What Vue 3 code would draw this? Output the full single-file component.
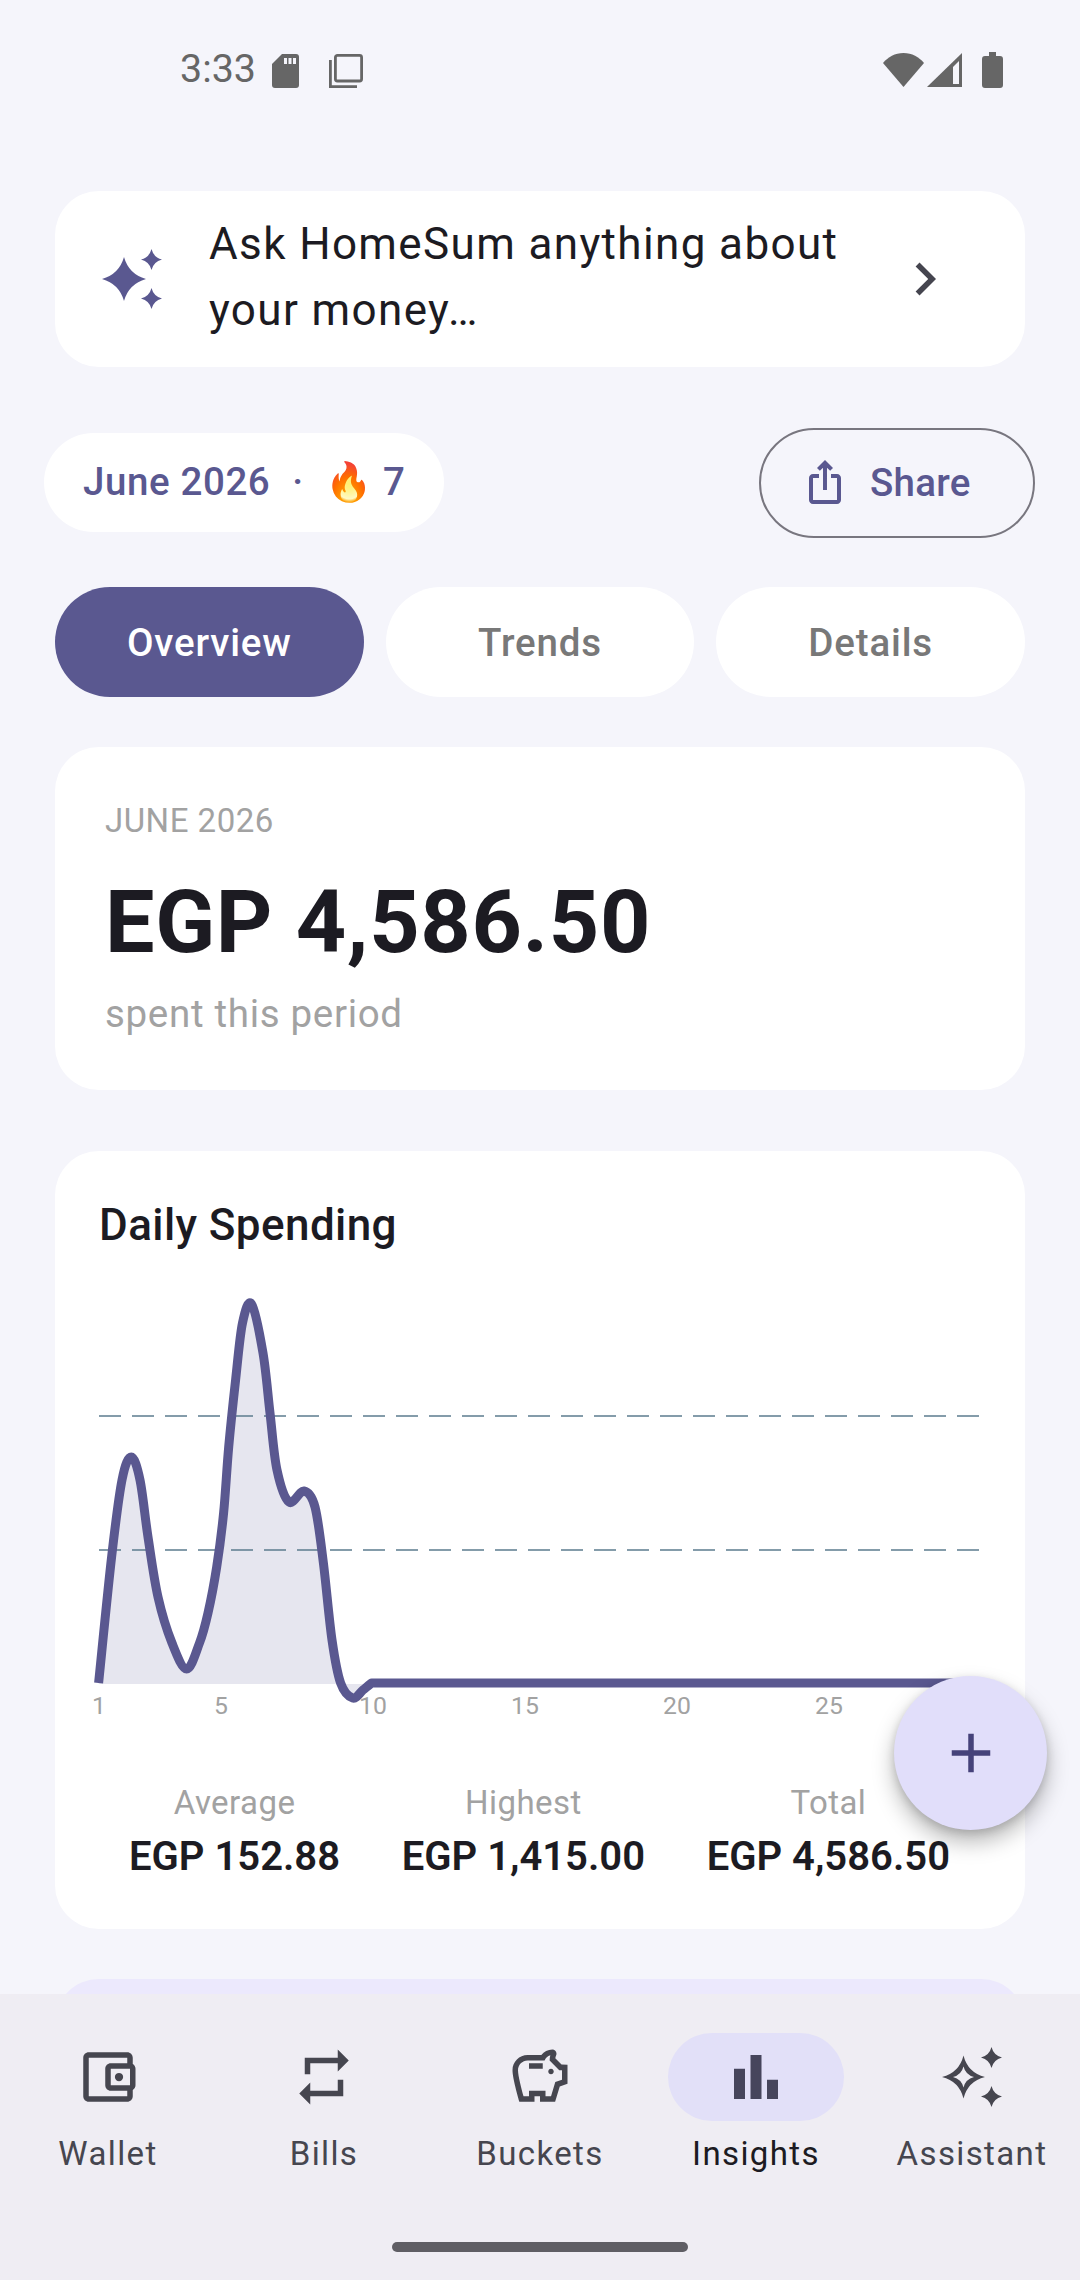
<script setup>
const navs = [
  { label: 'Wallet', icon: 'wallet' },
  { label: 'Bills', icon: 'bills' },
  { label: 'Buckets', icon: 'pig' },
  { label: 'Insights', icon: 'bars', active: true },
  { label: 'Assistant', icon: 'spark' },
]
const stats = [
  { label: 'Average', value: 'EGP 152.88' },
  { label: 'Highest', value: 'EGP 1,415.00' },
  { label: 'Total', value: 'EGP 4,586.50' },
]
const ticks = [
  { t: '1', x: 99 }, { t: '5', x: 221 }, { t: '10', x: 373 }, { t: '15', x: 525 }, { t: '20', x: 677 }, { t: '25', x: 829 },
]
const pts = [
  [98.6,1683],[111.6,1557],[122,1480],[131.3,1457],[140,1480],[148,1537],[158,1597],[172,1643],[186.7,1669],
  [199.5,1643],[208,1613],[216.7,1567],[223.6,1513],[228.7,1447],[235.6,1380],[242.5,1323],[251.5,1304],[263,1353],[270,1413],[277,1470],
  [289,1502],[304,1491],[315,1507],[323.4,1563],[332,1640],[340.6,1683],[352.7,1698],[363,1690],[371.6,1683],
]
function spline(p) {
  let d = `M${p[0][0]} ${p[0][1]}`
  for (let i = 0; i < p.length - 1; i++) {
    const a = p[Math.max(i - 1, 0)], b = p[i], c = p[i + 1], e = p[Math.min(i + 2, p.length - 1)]
    const c1 = [b[0] + (c[0] - a[0]) / 6, b[1] + (c[1] - a[1]) / 6]
    const c2 = [c[0] - (e[0] - b[0]) / 6, c[1] - (e[1] - b[1]) / 6]
    d += `C${c1[0].toFixed(1)} ${c1[1].toFixed(1)} ${c2[0].toFixed(1)} ${c2[1].toFixed(1)} ${c[0]} ${c[1]}`
  }
  return d
}
const curve = spline(pts)
const area = curve + 'L371.6 1684L98.6 1684Z'
const line = curve + 'H980'
function star(cx, cy, r, k = 0.2) {
  const q = r * k
  return `M${cx} ${cy - r}Q${cx + q} ${cy - q} ${cx + r} ${cy}Q${cx + q} ${cy + q} ${cx} ${cy + r}Q${cx - q} ${cy + q} ${cx - r} ${cy}Q${cx - q} ${cy - q} ${cx} ${cy - r}Z`
}
const sparkFilled = star(22, 30, 22, 0.22) + star(49.5, 10.5, 10.5) + star(49.5, 49.5, 10.5)
const sparkOutline = star(21.5, 30, 21.5) + star(21.5, 30, 10.5) + star(49.5, 10.5, 10.5) + star(49.5, 49.5, 10.5)
</script>

<template>
  <div class="screen">
    <div class="status">
      <span class="time">3:33</span>
      <svg class="st-sd" width="27" height="34" viewBox="0 0 27 34"><path d="M10 0H24a3 3 0 0 1 3 3V31a3 3 0 0 1-3 3H3a3 3 0 0 1-3-3V10Z" fill="#666"/><path d="M12 4h3v6h-3zM16.500 4h3v6h-3zM21 4h3v6h-3z" fill="#f5f5fb"/></svg>
      <svg class="st-copy" width="34" height="34" viewBox="0 0 34 34" fill="none" stroke="#666" stroke-width="2.800"><rect x="6.400" y="1.400" width="26.200" height="25.600" rx="2"/><path d="M1.400 6V32.600H28"/></svg>
      <span class="grow"></span>
      <svg class="st-wifi" width="41" height="34" viewBox="0 0 41 34"><path d="M20.500 34 0 10C5 4 12 0 20.500 0S36 4 41 10Z" fill="#666"/></svg>
      <svg class="st-sig" width="35" height="34" viewBox="0 0 35 34"><path d="M35 0V34H0Z" fill="#666"/><path d="M26 14 32 8V31H26Z" fill="#f5f5fb"/></svg>
      <svg class="st-bat" width="21" height="36" viewBox="0 0 21 36"><path d="M7 0h7v4h4a3 3 0 0 1 3 3V33a3 3 0 0 1-3 3H3a3 3 0 0 1-3-3V7a3 3 0 0 1 3-3h4Z" fill="#666"/></svg>
    </div>

    <main class="content">
      <div class="ask">
        <svg class="ask-icon" width="60" height="60" viewBox="0 0 60 60" fill="#5a5890"><path :d="sparkFilled"/></svg>
        <div class="ask-text">Ask HomeSum anything about your money…</div>
        <svg class="chev" width="66" height="66" viewBox="0 0 24 24" fill="#45454f"><path d="M10 6L8.590 7.410 13.170 12l-4.580 4.590L10 18l6-6z"/></svg>
      </div>

      <div class="row-head">
        <div class="period"><span>June 2026</span><span class="dot">·</span><span class="fire">🔥</span><span>7</span></div>
        <div class="share">
          <svg width="48" height="48" viewBox="0 0 24 24" fill="#5a5890"><path d="M16 5l-1.420 1.420-1.590-1.590V16h-1.980V4.830L9.420 6.420 8 5l4-4 4 4zm4 5v11c0 1.100-.9 2-2 2H6c-1.110 0-2-.9-2-2V10c0-1.110.89-2 2-2h3v2H6v11h12V10h-3V8h3c1.100 0 2 .89 2 2z"/></svg>
          <span>Share</span>
        </div>
      </div>

      <div class="tabs">
        <div class="tab on">Overview</div>
        <div class="tab">Trends</div>
        <div class="tab">Details</div>
      </div>

      <section class="card total">
        <div class="eyebrow">JUNE 2026</div>
        <div class="amount">EGP 4,586.50</div>
        <div class="sub">spent this period</div>
      </section>

      <section class="card chart">
        <h2>Daily Spending</h2>
        <div class="plot">
          <svg class="graph" width="970" height="470" viewBox="55 1253 970 470">
            <path :d="area" fill="#e6e6ef"/>
            <path class="grid" d="M99 1416H980M99 1550H980"/>
            <path class="curve" :d="line"/>
          </svg>
          <span v-for="t in ticks" :key="t.t" class="tick" :style="{ left: (t.x - 55) + 'px' }">{{ t.t }}</span>
        </div>
        <div class="stats">
          <div v-for="s in stats" :key="s.label" class="stat">
            <div class="stat-l">{{ s.label }}</div>
            <div class="stat-v">{{ s.value }}</div>
          </div>
        </div>
      </section>

      <div class="peek"></div>
    </main>

    <button class="fab" aria-label="Add"><svg width="66" height="66" viewBox="0 0 24 24" fill="#45427a"><path d="M19 13h-6v6h-2v-6H5v-2h6V5h2v6h6v2z"/></svg></button>

    <nav class="nav">
      <div class="nav-row">
        <div v-for="n in navs" :key="n.label" class="nav-item" :class="{ active: n.active }">
          <div class="pill">
            <svg v-if="n.icon === 'wallet'" width="66" height="66" viewBox="0 0 24 24" fill="#46464f"><path d="M21 7.280V5c0-1.100-.9-2-2-2H5c-1.110 0-2 .9-2 2v14c0 1.100.89 2 2 2h14c1.100 0 2-.9 2-2v-2.280c.59-.35 1-.98 1-1.720V9c0-.74-.41-1.370-1-1.720zM20 9v6h-7V9h7zM5 19V5h14v2h-6c-1.100 0-2 .9-2 2v6c0 1.100.9 2 2 2h6v2H5z"/><circle cx="16" cy="12" r="1.500"/></svg>
            <svg v-else-if="n.icon === 'bills'" width="66" height="66" viewBox="0 0 24 24" fill="#46464f"><path d="M7 7h10v3l4-4-4-4v3H5v6h2V7zm10 10H7v-3l-4 4 4 4v-3h12v-6h-2v4z"/></svg>
            <svg v-else-if="n.icon === 'pig'" width="66" height="66" viewBox="0 0 24 24" fill="#46464f"><path d="M15 10c0-.55.45-1 1-1s1 .45 1 1-.45 1-1 1-1-.45-1-1zM8 9h5V7H8v2zm14-1.500v6.970l-2.820.94L17.500 21H12v-2h-2v2H4.500S2 12.540 2 9.500 4.460 4 7.500 4h5c.91-1.210 2.360-2 4-2 .83 0 1.500.67 1.500 1.500 0 .21-.04.4-.12.58-.14.32-.26.68-.32 1.070l2.270 2.270L22 7.500zm-2 2h-1L15.500 6c0-.65.09-1.290.26-1.910-.97.25-1.760.97-2.090 1.910H7.500C5.570 6 4 7.570 4 9.500c0 1.880 1.220 6.650 2.010 9.500H8v-2h6v2h2.010l1.550-5.150 2.440-.82V9.500z"/></svg>
            <svg v-else-if="n.icon === 'bars'" width="66" height="66" viewBox="0 0 24 24" fill="#46455c"><path d="M4 9h4v11H4zM10 4h4v16h-4zM16 13h4v7h-4z"/></svg>
            <svg v-else width="60" height="60" viewBox="0 0 60 60" fill="#46464f"><path fill-rule="evenodd" :d="sparkOutline"/></svg>
          </div>
          <div class="nav-label">{{ n.label }}</div>
        </div>
      </div>
      <div class="home"></div>
    </nav>
  </div>
</template>

<style>
html, body { margin: 0; background: #f5f5fb; }
</style>

<style scoped>
.screen { position: relative; width: 1080px; height: 2280px; overflow: hidden; background: #f5f5fb; font-family: Roboto, "Liberation Sans", sans-serif; color: #1c1b22; display: flex; flex-direction: column; }
.status { flex: none; height: 191px; box-sizing: border-box; padding: 52px 77px 0 180px; display: flex; align-items: flex-start; }
.time { font-size: 39.4px; line-height: 34px; color: #666; width: 92px; }
.st-sd { margin-top: 2px; }
.st-copy { margin-top: 2px; margin-left: 30px; }
.grow { flex: 1; }
.st-wifi { margin-top: 1px; }
.st-sig { margin-top: 1px; margin-left: 3px; }
.st-bat { margin-left: 20px; }
.content { flex: 1; min-height: 0; overflow: hidden; display: flex; flex-direction: column; padding: 0 55px; }
.ask { flex: none; height: 176px; background: #fff; border-radius: 44px; display: flex; align-items: center; padding: 0 67px 0 47px; }
.ask-icon { flex: none; margin-right: 47px; }
.ask-text { flex: 1; font-size: 44px; line-height: 66px; letter-spacing: 1.375px; color: #1c1b22; margin-top: -5px; }
.chev { flex: none; }
.row-head { flex: none; display: flex; justify-content: space-between; align-items: center; margin: 61px -10px 0 -11px; height: 110px; }
.period { display: flex; align-items: center; height: 99px; background: #fff; border-radius: 50px; padding: 0 39px 2px 39px; box-sizing: border-box; margin-top: -1px; color: #5a5890; font-size: 38.500px; font-weight: 500; letter-spacing: .6px; }
.dot { margin: 0 21px 0 22px; }
.fire { font-size: 38px; margin-right: 11px; letter-spacing: 0; }
.share { box-sizing: border-box; width: 276px; height: 110px; border: 2px solid #78767f; border-radius: 55px; display: flex; align-items: center; padding: 0 0 2px 40px; gap: 21px; color: #5a5890; font-size: 38.500px; font-weight: 500; letter-spacing: .275px; }
.tabs { flex: none; display: grid; grid-template-columns: repeat(3, 1fr); gap: 22px; margin-top: 49px; }
.tab { height: 110px; background: #fff; border-radius: 55px; display: flex; align-items: center; justify-content: center; font-size: 38.500px; letter-spacing: .85px; font-weight: 500; color: #787878; }
.tab.on { background: #5a5890; color: #fff; }
.card { background: #fff; border-radius: 44px; flex: none; }
.total { box-sizing: border-box; height: 343px; margin-top: 50px; padding: 52px 50px 0; }
.eyebrow { font-size: 33px; line-height: 44px; color: #a2a2a2; letter-spacing: .5px; }
.amount { font-size: 88px; font-weight: 700; line-height: 100px; margin-top: 29px; color: #1c1b22; letter-spacing: .66px; }
.sub { font-size: 38.500px; line-height: 48px; margin-top: 18px; color: #a2a2a2; letter-spacing: .69px; }
.chart { box-sizing: border-box; height: 778px; margin-top: 61px; padding-top: 47px; }
.chart h2 { margin: 0 0 0 44px; font-size: 44px; line-height: 55px; font-weight: 500; letter-spacing: .41px; color: #1c1b22; }
.plot { position: relative; height: 470px; }
.graph { display: block; }
.grid { stroke: #5c7c8e; stroke-width: 1.600; stroke-dasharray: 22 11; fill: none; }
.curve { stroke: #5a5890; stroke-width: 9; fill: none; stroke-linejoin: round; }
.tick { position: absolute; top: 438px; transform: translateX(-50%); font-size: 24.750px; line-height: 30px; color: #a2a2a2; }
.stats { margin-top: 58px; padding: 0 75px 0 74px; display: flex; justify-content: space-between; }
.stat { display: flex; flex-direction: column; align-items: center; }
.stat-l { font-size: 33px; line-height: 44px; letter-spacing: .44px; color: #a2a2a2; }
.stat-v { font-size: 40px; font-weight: 600; line-height: 50px; margin-top: 7px; color: #1c1b22; }
.peek { flex: none; height: 60px; margin-top: 50px; background: #ece9fd; border-radius: 44px 44px 0 0; }
.fab { position: absolute; left: 894px; top: 1676px; width: 153px; height: 154px; border: 0; border-radius: 50%; background: #e1defa; box-shadow: 0 12px 22px rgba(0,0,0,.28), 0 3px 8px rgba(0,0,0,.14); display: flex; align-items: center; justify-content: center; padding: 0; }
.nav { flex: none; height: 286px; background: #efedf3; display: flex; flex-direction: column; box-sizing: border-box; padding: 39px 0 28px; }
.nav-row { display: flex; justify-content: space-between; }
.nav-item { width: 216px; display: flex; flex-direction: column; align-items: center; }
.pill { width: 176px; height: 88px; border-radius: 44px; display: flex; align-items: center; justify-content: center; }
.active .pill { background: #e2e0f8; }
.nav-label { margin-top: 11px; font-size: 33px; line-height: 44px; letter-spacing: 1.375px; font-weight: 400; color: #46464f; }
.active .nav-label { color: #1c1b22; font-weight: 450; }
.home { margin: auto auto 0; width: 296px; height: 10px; border-radius: 5px; background: #5f5e64; }
</style>
